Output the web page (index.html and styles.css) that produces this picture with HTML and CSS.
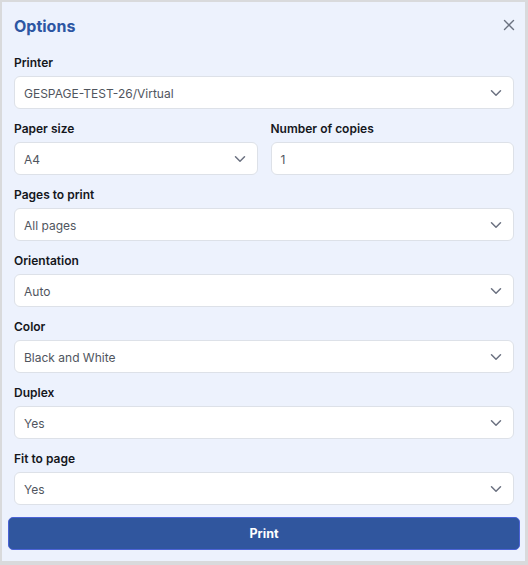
FILE: index.html
```html
<!DOCTYPE html>
<html>
<head>
<meta charset="utf-8">
<link rel="stylesheet" href="styles.css">
</head>
<body>
<div class="dialog">
  <div class="header">
    <h1 class="title">Options</h1>
    <button class="close" aria-label="Close">
      <svg width="12" height="12" viewBox="0 0 12 12"><path d="M1.5 1.5L10.5 10.5M10.5 1.5L1.5 10.5" stroke="#6b7280" stroke-width="1.4" stroke-linecap="round" fill="none"/></svg>
    </button>
  </div>
  <div class="form">
    <div class="field">
      <div class="label">Printer</div>
      <div class="input select"><span>GESPAGE-TEST-26/Virtual</span><svg class="chev" width="12" height="8" viewBox="0 0 12 8"><path d="M1.5 1.8L6 6.2L10.5 1.8" stroke="#6b7180" stroke-width="1.5" fill="none" stroke-linecap="round" stroke-linejoin="round"/></svg></div>
    </div>
    <div class="row">
      <div class="field">
        <div class="label">Paper size</div>
        <div class="input select"><span>A4</span><svg class="chev" width="12" height="8" viewBox="0 0 12 8"><path d="M1.5 1.8L6 6.2L10.5 1.8" stroke="#6b7180" stroke-width="1.5" fill="none" stroke-linecap="round" stroke-linejoin="round"/></svg></div>
      </div>
      <div class="field">
        <div class="label">Number of copies</div>
        <div class="input"><span>1</span></div>
      </div>
    </div>
    <div class="field">
      <div class="label">Pages to print</div>
      <div class="input select"><span>All pages</span><svg class="chev" width="12" height="8" viewBox="0 0 12 8"><path d="M1.5 1.8L6 6.2L10.5 1.8" stroke="#6b7180" stroke-width="1.5" fill="none" stroke-linecap="round" stroke-linejoin="round"/></svg></div>
    </div>
    <div class="field">
      <div class="label">Orientation</div>
      <div class="input select"><span>Auto</span><svg class="chev" width="12" height="8" viewBox="0 0 12 8"><path d="M1.5 1.8L6 6.2L10.5 1.8" stroke="#6b7180" stroke-width="1.5" fill="none" stroke-linecap="round" stroke-linejoin="round"/></svg></div>
    </div>
    <div class="field">
      <div class="label">Color</div>
      <div class="input select"><span>Black and White</span><svg class="chev" width="12" height="8" viewBox="0 0 12 8"><path d="M1.5 1.8L6 6.2L10.5 1.8" stroke="#6b7180" stroke-width="1.5" fill="none" stroke-linecap="round" stroke-linejoin="round"/></svg></div>
    </div>
    <div class="field">
      <div class="label">Duplex</div>
      <div class="input select"><span>Yes</span><svg class="chev" width="12" height="8" viewBox="0 0 12 8"><path d="M1.5 1.8L6 6.2L10.5 1.8" stroke="#6b7180" stroke-width="1.5" fill="none" stroke-linecap="round" stroke-linejoin="round"/></svg></div>
    </div>
    <div class="field">
      <div class="label">Fit to page</div>
      <div class="input select"><span>Yes</span><svg class="chev" width="12" height="8" viewBox="0 0 12 8"><path d="M1.5 1.8L6 6.2L10.5 1.8" stroke="#6b7180" stroke-width="1.5" fill="none" stroke-linecap="round" stroke-linejoin="round"/></svg></div>
    </div>
  </div>
  <div class="actions">
    <button class="print">Print</button>
  </div>
</div>
</body>
</html>
```
FILE: styles.css
```css
* { box-sizing: border-box; }
html, body { margin: 0; padding: 0; }
body {
  font-family: Inter, "Noto Sans", "Liberation Sans", sans-serif;
  background: #ffffff;
}
.dialog {
  width: 528px;
  height: 565px;
  background: #edf2fd;
  border-style: solid;
  border-color: #d9dadc;
  border-width: 2px 3px 4px 2px;
  display: flex;
  flex-direction: column;
}
.header {
  height: 48px;
  display: flex;
  align-items: center;
  justify-content: space-between;
  padding: 0 8px 0 12px;
}
.title {
  margin: 0;
  font-size: 16px;
  font-weight: 700;
  color: #2d56a3;
}
.close {
  border: 0;
  background: transparent;
  padding: 0;
  width: 16px;
  height: 16px;
  display: flex;
  align-items: center;
  justify-content: center;
  margin-top: -2px;
}
.form {
  padding: 2px 11px 0 12px;
  display: flex;
  flex-direction: column;
  gap: 9px;
}
.row {
  display: grid;
  grid-template-columns: 1fr 1fr;
  gap: 13px;
}
.field {
  display: flex;
  flex-direction: column;
}
.label {
  font-size: 12px;
  font-weight: 600;
  color: #15171c;
  line-height: 20px;
  padding-top: 1px;
  margin-bottom: 3px;
}
.input {
  height: 33px;
  background: #ffffff;
  border: 1px solid #dde1e8;
  border-radius: 6px;
  display: flex;
  align-items: center;
  justify-content: space-between;
  padding: 1px 11px 0 9px;
  font-size: 12px;
  color: #50555e;
}
.chev { flex: none; }
.actions {
  padding: 12px 5px 0 6px;
}
.print {
  width: 100%;
  height: 33px;
  background: #30569e;
  border: 1px solid #4b63d6;
  border-radius: 5px;
  color: #ffffff;
  font-family: Inter, "Noto Sans", "Liberation Sans", sans-serif;
  font-size: 12.5px;
  font-weight: 700;
}
```
